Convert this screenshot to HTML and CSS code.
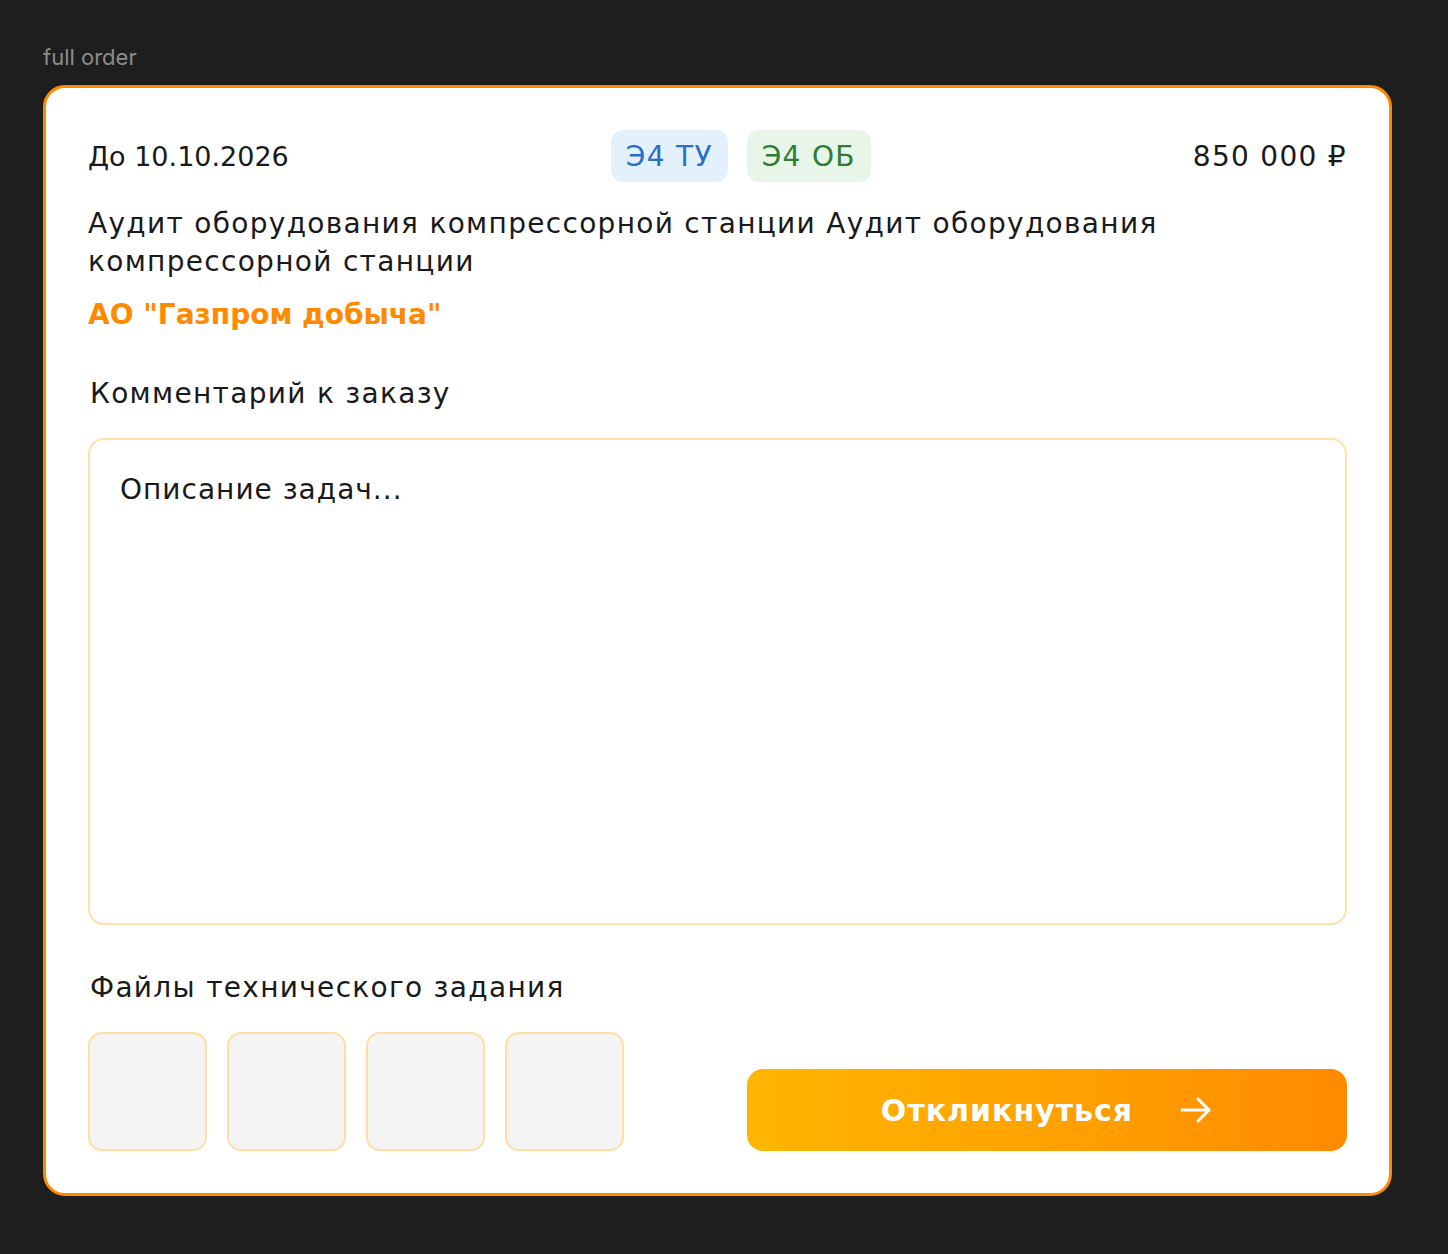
FILE: index.html
```html
<!DOCTYPE html>
<html lang="ru">
<head>
  <meta charset="UTF-8">
  <meta name="viewport" content="width=device-width, initial-scale=1.0">
  <title>full order</title>
  <link rel="stylesheet" href="styles.css">
</head>
<body>
  <div class="frame-label">full order</div>
  <div class="card">
    <div class="head">
      <div class="date">До 10.10.2026</div>
      <div class="tags">
        <span class="tag tag-blue">Э4 ТУ</span>
        <span class="tag tag-green">Э4 ОБ</span>
      </div>
      <div class="price">850 000 ₽</div>
    </div>

    <div class="title">Аудит оборудования компрессорной станции Аудит оборудования компрессорной станции</div>
    <div class="company">АО "Газпром добыча"</div>

    <label class="section-label" for="comment">Комментарий к заказу</label>
    <textarea id="comment" class="comment" placeholder="Описание задач..."></textarea>

    <div class="section-label files-label">Файлы технического задания</div>
    <div class="bottom">
      <div class="files">
        <div class="file"></div>
        <div class="file"></div>
        <div class="file"></div>
        <div class="file"></div>
      </div>
      <button class="respond" type="button">
        <span>Откликнуться</span>
        <svg width="34" height="34" viewBox="0 0 34 34" fill="none" stroke="#fff" stroke-width="3" stroke-linecap="round" stroke-linejoin="round">
          <path d="M3 17h27"/>
          <path d="M19 6l11 11-11 11"/>
        </svg>
      </button>
    </div>
  </div>
</body>
</html>
```

FILE: styles.css
```css
body { margin: 0; background: #1e1e1e; font-family: "DejaVu Sans", "Noto Sans", sans-serif; color: #1a1a1a; }
.frame-label { font-family: Inter, sans-serif; font-size: 22px; color: #8c8c8c; padding: 44px 0 0 43px; height: 41px; line-height: 26px; }
.card { margin-left: 43px; width: 1349px; box-sizing: border-box; background: #fff; border: 3px solid #ff8a00; border-radius: 22px; padding: 42px 42px 42px 42px; letter-spacing: 1.3px; }
.head { display: flex; justify-content: space-between; align-items: center; height: 52px; }
.date { font-size: 27px; letter-spacing: 0; }
.price { font-size: 28px; }
.tags { display: flex; gap: 19px; }
.tag { display: inline-flex; align-items: center; height: 52px; padding: 0 15px; border-radius: 12px; font-size: 28px; }
.tag-blue { background: #e3f1fd; color: #2a6fc4; }
.tag-green { background: #e8f5e9; color: #2e7d32; }
.title { font-size: 28px; line-height: 38px; margin-top: 23px; max-width: 1120px; }
.company { font-size: 28px; font-weight: 600; color: #ff8a00; margin-top: 15px; line-height: 38px; letter-spacing: 0; }
.section-label { display: block; font-size: 28px; line-height: 38px; padding-left: 2px; }
label.section-label { margin-top: 41px; }
.comment { display: block; width: 100%; box-sizing: border-box; height: 487px; margin-top: 25px; border: 2px solid #ffe1a6; border-radius: 16px; padding: 33px 30px; font-family: inherit; font-size: 28px; letter-spacing: 1px; resize: none; outline: none; }
.comment::placeholder { color: #1a1a1a; }
.files-label { margin-top: 44px; }
.bottom { display: flex; justify-content: space-between; align-items: flex-end; margin-top: 25px; }
.files { display: flex; gap: 20px; }
.file { width: 119px; height: 119px; box-sizing: border-box; background: #f4f4f4; border: 2px solid #ffdfa3; border-radius: 14px; }
.respond { display: flex; align-items: center; justify-content: center; gap: 46px; width: 600px; height: 82px; border: none; border-radius: 16px; background: linear-gradient(90deg, #ffb600 0%, #ffa000 55%, #ff8a00 100%); color: #fff; font-family: inherit; font-size: 30px; font-weight: 600; letter-spacing: 1px; padding: 0; }
.respond svg { display: block; }
```
